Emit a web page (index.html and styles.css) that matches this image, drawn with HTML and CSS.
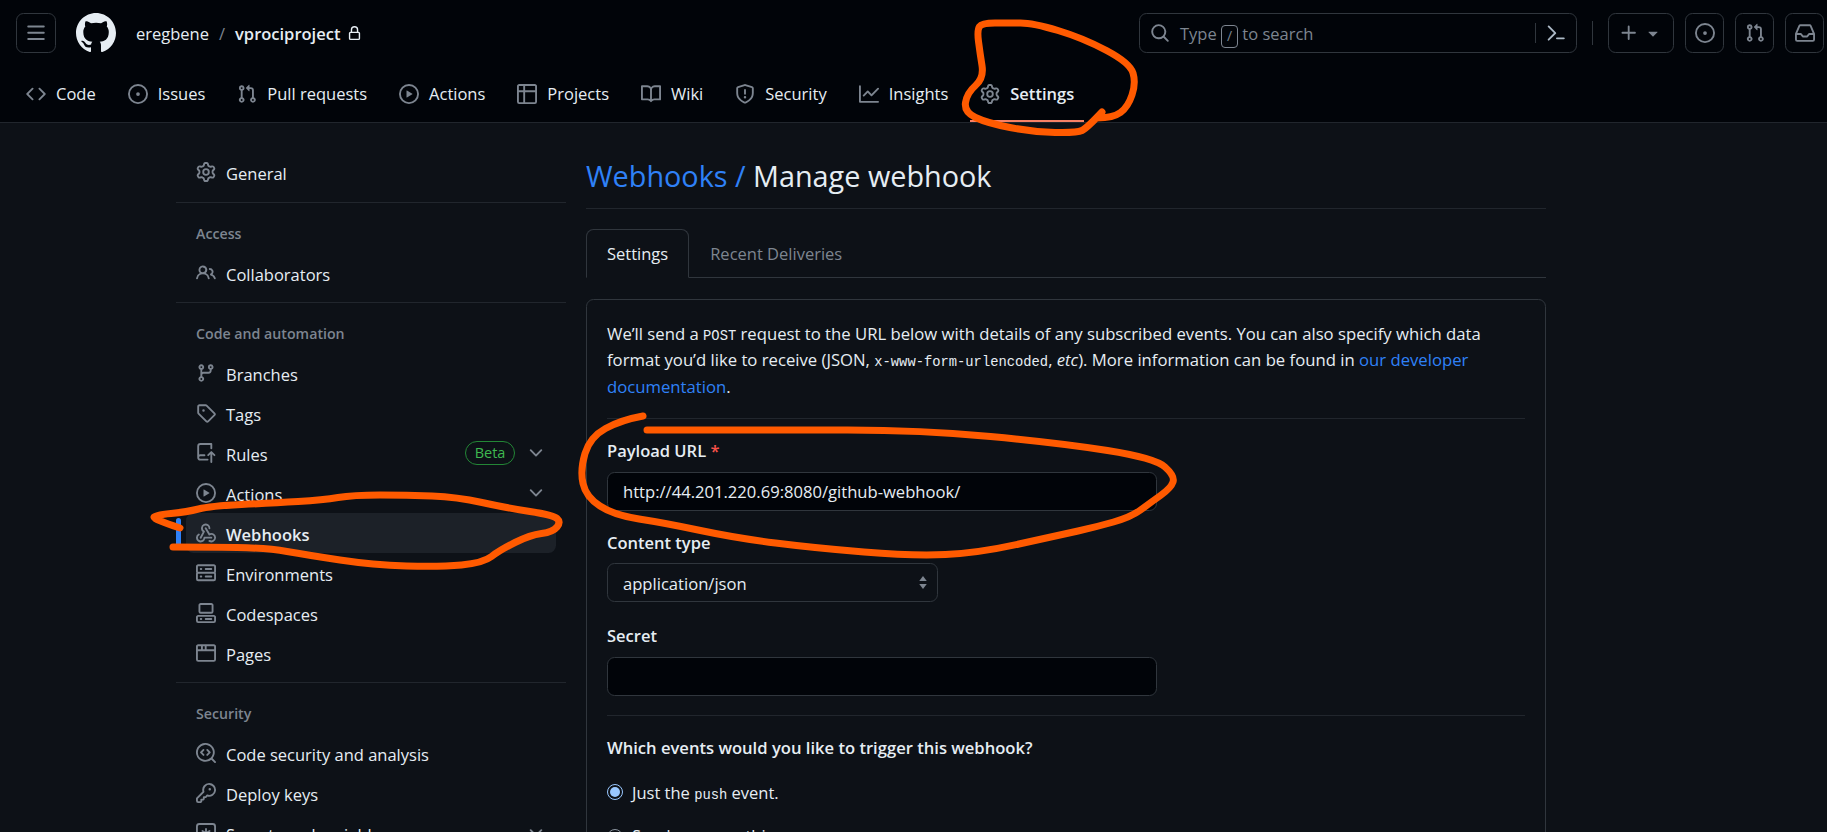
FILE: index.html
```html
<!DOCTYPE html>
<html lang="en">
<head>
<meta charset="UTF-8">
<meta name="viewport" content="width=device-width, initial-scale=1.0">
<title>Manage webhook</title>
<link rel="stylesheet" href="styles.css">
</head>
<body>
<svg class="sprite" xmlns="http://www.w3.org/2000/svg">
    <symbol id="i-bars" viewBox="0 0 16 16"><path d="M1 2.75A.75.75 0 0 1 1.75 2h12.5a.75.75 0 0 1 0 1.5H1.75A.75.75 0 0 1 1 2.75Zm0 5A.75.75 0 0 1 1.75 7h12.5a.75.75 0 0 1 0 1.5H1.75A.75.75 0 0 1 1 7.75ZM1.75 12h12.5a.75.75 0 0 1 0 1.5H1.75a.75.75 0 0 1 0-1.5Z"/></symbol>
    <symbol id="i-github" viewBox="0 0 16 16"><path d="M8 0c4.42 0 8 3.58 8 8a8.013 8.013 0 0 1-5.45 7.59c-.4.08-.55-.17-.55-.38 0-.27.01-1.13.01-2.2 0-.75-.25-1.23-.54-1.48 1.78-.2 3.65-.88 3.65-3.95 0-.88-.31-1.59-.82-2.15.08-.2.36-1.02-.08-2.12 0 0-.67-.22-2.2.82-.64-.18-1.32-.27-2-.27-.68 0-1.36.09-2 .27-1.53-1.03-2.2-.82-2.2-.82-.44 1.1-.16 1.92-.08 2.12-.51.56-.82 1.28-.82 2.15 0 3.06 1.86 3.75 3.64 3.95-.23.2-.44.55-.51 1.07-.46.21-1.61.55-2.33-.66-.15-.24-.6-.83-1.23-.82-.67.01-.27.38.01.53.34.19.73.9.82 1.13.16.45.68 1.31 2.69.94 0 .67.01 1.3.01 1.49 0 .21-.15.45-.55.38A7.995 7.995 0 0 1 0 8c0-4.42 3.58-8 8-8Z"/></symbol>
    <symbol id="i-lock" viewBox="0 0 16 16"><path d="M4 4a4 4 0 0 1 8 0v2h.25c.966 0 1.75.784 1.75 1.75v5.5A1.75 1.75 0 0 1 12.25 15h-8.5A1.75 1.75 0 0 1 2 13.25v-5.5C2 6.784 2.784 6 3.75 6H4Zm8.25 3.5h-8.5a.25.25 0 0 0-.25.25v5.5c0 .138.112.25.25.25h8.5a.25.25 0 0 0 .25-.25v-5.5a.25.25 0 0 0-.25-.25ZM10.5 6V4a2.5 2.5 0 1 0-5 0v2Z"/></symbol>
    <symbol id="i-code" viewBox="0 0 16 16"><path d="m11.28 3.22 4.25 4.25a.75.75 0 0 1 0 1.06l-4.25 4.25a.749.749 0 0 1-1.275-.326.749.749 0 0 1 .215-.734L13.94 8l-3.72-3.72a.749.749 0 0 1 .326-1.275.749.749 0 0 1 .734.215Zm-6.56 0a.751.751 0 0 1 1.042.018.751.751 0 0 1 .018 1.042L2.06 8l3.72 3.72a.749.749 0 0 1-.326 1.275.749.749 0 0 1-.734-.215L.47 8.53a.75.75 0 0 1 0-1.06Z"/></symbol>
    <symbol id="i-issue" viewBox="0 0 16 16"><path d="M8 9.5a1.5 1.5 0 1 0 0-3 1.5 1.5 0 0 0 0 3Z"/><path d="M8 0a8 8 0 1 1 0 16A8 8 0 0 1 8 0ZM1.5 8a6.5 6.5 0 1 0 13 0 6.5 6.5 0 0 0-13 0Z"/></symbol>
    <symbol id="i-pull" viewBox="0 0 16 16"><path d="M1.5 3.25a2.25 2.25 0 1 1 3 2.122v5.256a2.251 2.251 0 1 1-1.5 0V5.372A2.25 2.25 0 0 1 1.5 3.25Zm5.677-.177L9.573.677A.25.25 0 0 1 10 .854V2.5h1A2.5 2.5 0 0 1 13.5 5v5.628a2.251 2.251 0 1 1-1.5 0V5a1 1 0 0 0-1-1h-1v1.646a.25.25 0 0 1-.427.177L7.177 3.427a.25.25 0 0 1 0-.354ZM3.75 2.5a.75.75 0 1 0 0 1.5.75.75 0 0 0 0-1.5Zm0 9.5a.75.75 0 1 0 0 1.5.75.75 0 0 0 0-1.5Zm8.25.75a.75.75 0 1 0 1.5 0 .75.75 0 0 0-1.5 0Z"/></symbol>
    <symbol id="i-play" viewBox="0 0 16 16"><path d="M8 0a8 8 0 1 1 0 16A8 8 0 0 1 8 0ZM1.5 8a6.5 6.5 0 1 0 13 0 6.5 6.5 0 0 0-13 0Zm4.879-2.773 4.264 2.559a.25.25 0 0 1 0 .428l-4.264 2.559A.25.25 0 0 1 6 10.559V5.442a.25.25 0 0 1 .379-.215Z"/></symbol>
    <symbol id="i-table" viewBox="0 0 16 16"><path d="M0 1.75C0 .784.784 0 1.75 0h12.5C15.216 0 16 .784 16 1.75v12.5A1.75 1.75 0 0 1 14.25 16H1.75A1.75 1.75 0 0 1 0 14.25ZM6.5 6.5v8h7.75a.25.25 0 0 0 .25-.25V6.5Zm8-1.5V1.75a.25.25 0 0 0-.25-.25H6.5V5Zm-13 1.5v7.75c0 .138.112.25.25.25H5v-8ZM5 5V1.5H1.75a.25.25 0 0 0-.25.25V5Z"/></symbol>
    <symbol id="i-book" viewBox="0 0 16 16"><path d="M0 1.75A.75.75 0 0 1 .75 1h4.253c1.227 0 2.317.59 3 1.501A3.743 3.743 0 0 1 11.006 1h4.245a.75.75 0 0 1 .75.75v10.5a.75.75 0 0 1-.75.75h-4.507a2.25 2.25 0 0 0-1.591.659l-.622.621a.75.75 0 0 1-1.06 0l-.622-.621A2.25 2.25 0 0 0 5.258 13H.75a.75.75 0 0 1-.75-.75Zm7.251 10.324.004-5.073-.002-2.253A2.25 2.25 0 0 0 5.003 2.5H1.5v9h3.757a3.75 3.75 0 0 1 1.994.574ZM8.755 4.75l-.004 7.322a3.752 3.752 0 0 1 1.992-.572H14.5v-9h-3.495a2.25 2.25 0 0 0-2.25 2.25Z"/></symbol>
    <symbol id="i-shield" viewBox="0 0 16 16"><path d="M7.467.133a1.748 1.748 0 0 1 1.066 0l5.25 1.68A1.75 1.75 0 0 1 15 3.48V7c0 1.566-.32 3.182-1.303 4.682-.983 1.498-2.585 2.813-5.032 3.855a1.697 1.697 0 0 1-1.33 0c-2.447-1.042-4.049-2.357-5.032-3.855C1.32 10.182 1 8.566 1 7V3.48a1.75 1.75 0 0 1 1.217-1.667Zm.61 1.429a.25.25 0 0 0-.153 0l-5.25 1.68a.25.25 0 0 0-.174.238V7c0 1.358.275 2.666 1.057 3.86.784 1.194 2.121 2.34 4.366 3.297a.196.196 0 0 0 .154 0c2.245-.956 3.582-2.104 4.366-3.298C13.225 9.666 13.5 8.36 13.5 7V3.48a.251.251 0 0 0-.174-.237l-5.25-1.68ZM8.75 4.75v3a.75.75 0 0 1-1.5 0v-3a.75.75 0 0 1 1.5 0ZM9 10.5a1 1 0 1 1-2 0 1 1 0 0 1 2 0Z"/></symbol>
    <symbol id="i-graph" viewBox="0 0 16 16"><path d="M1.5 1.75V13.5h13.75a.75.75 0 0 1 0 1.5H.75a.75.75 0 0 1-.75-.75V1.75a.75.75 0 0 1 1.5 0Zm14.28 2.53-5.25 5.25a.75.75 0 0 1-1.06 0L7 7.06 4.28 9.78a.751.751 0 0 1-1.042-.018.751.751 0 0 1-.018-1.042l3.25-3.25a.75.75 0 0 1 1.06 0L10 7.94l4.72-4.72a.751.751 0 0 1 1.042.018.751.751 0 0 1 .018 1.042Z"/></symbol>
    <symbol id="i-gear" viewBox="0 0 16 16"><path d="M8 0a8.2 8.2 0 0 1 .701.031C9.444.095 9.99.645 10.16 1.29l.288 1.107c.018.066.079.158.212.224.231.114.454.243.668.386.123.082.233.09.299.071l1.103-.303c.644-.176 1.392.021 1.82.63.27.385.506.792.704 1.218.315.675.111 1.422-.364 1.891l-.814.806c-.049.048-.098.147-.088.294.016.257.016.515 0 .772-.01.147.038.246.088.294l.814.806c.475.469.679 1.216.364 1.891a7.977 7.977 0 0 1-.704 1.217c-.428.61-1.176.807-1.82.63l-1.102-.302c-.067-.019-.177-.011-.3.071a5.909 5.909 0 0 1-.668.386c-.133.066-.194.158-.211.224l-.29 1.106c-.168.646-.715 1.196-1.458 1.26a8.006 8.006 0 0 1-1.402 0c-.743-.064-1.289-.614-1.458-1.26l-.289-1.106c-.018-.066-.079-.158-.212-.224a5.738 5.738 0 0 1-.668-.386c-.123-.082-.233-.09-.299-.071l-1.103.303c-.644.176-1.392-.021-1.82-.63a8.12 8.12 0 0 1-.704-1.218c-.315-.675-.111-1.422.363-1.891l.815-.806c.05-.048.098-.147.088-.294a6.214 6.214 0 0 1 0-.772c.01-.147-.038-.246-.088-.294l-.815-.806C.635 6.045.431 5.298.746 4.623a7.92 7.92 0 0 1 .704-1.217c.428-.61 1.176-.807 1.82-.63l1.102.302c.067.019.177.011.3-.071.214-.143.437-.272.668-.386.133-.066.194-.158.211-.224l.29-1.106C6.009.645 6.556.095 7.299.03 7.53.01 7.764 0 8 0Zm-.571 1.525c-.036.003-.108.036-.137.146l-.289 1.105c-.147.561-.549.967-.998 1.189-.173.086-.34.183-.5.29-.417.278-.97.423-1.529.27l-1.103-.303c-.109-.03-.175.016-.195.045-.22.312-.412.644-.573.99-.014.031-.021.11.059.19l.815.806c.411.406.562.957.53 1.456a4.709 4.709 0 0 0 0 .582c.032.499-.119 1.05-.53 1.456l-.815.806c-.081.08-.073.159-.059.19.162.346.353.677.573.989.02.03.085.076.195.046l1.102-.303c.56-.153 1.113-.008 1.53.27.161.107.328.204.501.29.447.222.85.629.997 1.189l.289 1.105c.029.109.101.143.137.146a6.6 6.6 0 0 0 1.142 0c.036-.003.108-.036.137-.146l.289-1.105c.147-.561.549-.967.998-1.189.173-.086.34-.183.5-.29.417-.278.97-.423 1.529-.27l1.103.303c.109.029.175-.016.195-.045.22-.313.411-.644.573-.99.014-.031.021-.11-.059-.19l-.815-.806c-.411-.406-.562-.957-.53-1.456a4.709 4.709 0 0 0 0-.582c-.032-.499.119-1.05.53-1.456l.815-.806c.081-.08.073-.159.059-.19a6.464 6.464 0 0 0-.573-.989c-.02-.03-.085-.076-.195-.046l-1.102.303c-.56.153-1.113.008-1.53-.27a4.44 4.44 0 0 0-.501-.29c-.447-.222-.85-.629-.997-1.189l-.289-1.105c-.029-.11-.101-.143-.137-.146a6.6 6.6 0 0 0-1.142 0ZM11 8a3 3 0 1 1-6 0 3 3 0 0 1 6 0ZM9.5 8a1.5 1.5 0 1 0-3.001.001A1.5 1.5 0 0 0 9.5 8Z"/></symbol>
    <symbol id="i-search" viewBox="0 0 16 16"><path d="M10.68 11.74a6 6 0 0 1-7.922-8.982 6 6 0 0 1 8.982 7.922l3.04 3.04a.749.749 0 0 1-.326 1.275.749.749 0 0 1-.734-.215ZM11.5 7a4.499 4.499 0 1 0-8.997 0A4.499 4.499 0 0 0 11.5 7Z"/></symbol>
    <symbol id="i-palette" viewBox="0 0 16 16"><path d="m6.354 8.04-4.773 4.773a.75.75 0 1 0 1.061 1.06L7.945 8.57a.75.75 0 0 0 0-1.06L2.642 2.206a.75.75 0 0 0-1.06 1.061L6.353 8.04ZM8.75 11.5a.75.75 0 0 0 0 1.5h5.5a.75.75 0 0 0 0-1.5h-5.5Z"/></symbol>
    <symbol id="i-plus" viewBox="0 0 16 16"><path d="M7.75 2a.75.75 0 0 1 .75.75V7h4.25a.75.75 0 0 1 0 1.5H8.5v4.25a.75.75 0 0 1-1.5 0V8.5H2.75a.75.75 0 0 1 0-1.5H7V2.75A.75.75 0 0 1 7.75 2Z"/></symbol>
    <symbol id="i-caret" viewBox="0 0 16 16"><path d="m4.427 7.427 3.396 3.396a.25.25 0 0 0 .354 0l3.396-3.396A.25.25 0 0 0 11.396 7H4.604a.25.25 0 0 0-.177.427Z"/></symbol>
    <symbol id="i-inbox" viewBox="0 0 16 16"><path d="M2.8 2.06A1.75 1.75 0 0 1 4.41 1h7.18c.7 0 1.333.417 1.61 1.06l2.74 6.395c.04.093.06.194.06.295v4.5A1.75 1.75 0 0 1 14.25 15H1.75A1.75 1.75 0 0 1 0 13.25v-4.5c0-.101.02-.202.06-.295Zm1.61.44a.25.25 0 0 0-.23.152L1.887 8H4.75a.75.75 0 0 1 .6.3L6.625 10h2.75l1.275-1.7a.75.75 0 0 1 .6-.3h2.863L11.82 2.652a.25.25 0 0 0-.23-.152Zm10.09 7h-2.875l-1.275 1.7a.75.75 0 0 1-.6.3h-3.5a.75.75 0 0 1-.6-.3L4.375 9.5H1.5v3.75c0 .138.112.25.25.25h12.5a.25.25 0 0 0 .25-.25Z"/></symbol>
    <symbol id="i-people" viewBox="0 0 16 16"><path d="M2 5.5a3.5 3.5 0 1 1 5.898 2.549 5.508 5.508 0 0 1 3.034 4.084.75.75 0 1 1-1.482.235 4 4 0 0 0-7.9 0 .75.75 0 0 1-1.482-.236A5.507 5.507 0 0 1 3.102 8.05 3.493 3.493 0 0 1 2 5.5ZM11 4a3.001 3.001 0 0 1 2.22 5.018 5.01 5.01 0 0 1 2.56 3.012.749.749 0 0 1-.885.954.752.752 0 0 1-.549-.514 3.507 3.507 0 0 0-2.522-2.372.75.75 0 0 1-.574-.73v-.352a.75.75 0 0 1 .416-.672A1.5 1.5 0 0 0 11 5.5.75.75 0 0 1 11 4Zm-5.5-.5a2 2 0 1 0-.001 3.999A2 2 0 0 0 5.5 3.5Z"/></symbol>
    <symbol id="i-branch" viewBox="0 0 16 16"><path d="M9.5 3.25a2.25 2.25 0 1 1 3 2.122V6A2.5 2.5 0 0 1 10 8.5H6a1 1 0 0 0-1 1v1.128a2.251 2.251 0 1 1-1.5 0V5.372a2.25 2.25 0 1 1 1.5 0v1.836A2.493 2.493 0 0 1 6 7h4a1 1 0 0 0 1-1v-.628A2.25 2.25 0 0 1 9.5 3.25Zm-6 0a.75.75 0 1 0 1.5 0 .75.75 0 0 0-1.5 0Zm8.25-.75a.75.75 0 1 0 0 1.5.75.75 0 0 0 0-1.5ZM4.25 12a.75.75 0 1 0 0 1.5.75.75 0 0 0 0-1.5Z"/></symbol>
    <symbol id="i-tag" viewBox="0 0 16 16"><path d="M1 7.775V2.75C1 1.784 1.784 1 2.75 1h5.025c.464 0 .91.184 1.238.513l6.25 6.25a1.75 1.75 0 0 1 0 2.474l-5.026 5.026a1.75 1.75 0 0 1-2.474 0l-6.25-6.25A1.752 1.752 0 0 1 1 7.775Zm1.5 0c0 .066.026.13.073.177l6.25 6.25a.25.25 0 0 0 .354 0l5.025-5.025a.25.25 0 0 0 0-.354l-6.25-6.25a.25.25 0 0 0-.177-.073H2.75a.25.25 0 0 0-.25.25ZM6 5a1 1 0 1 1 0 2 1 1 0 0 1 0-2Z"/></symbol>
    <symbol id="i-rules" viewBox="0 0 16 16"><path d="M1 2.5A2.5 2.5 0 0 1 3.5 0h8.75a.75.75 0 0 1 .75.75v3.5a.75.75 0 0 1-1.5 0V1.5h-8a1 1 0 0 0-1 1v6.708A2.493 2.493 0 0 1 3.5 9h3.25a.75.75 0 0 1 0 1.5H3.5a1 1 0 0 0 0 2h5.75a.75.75 0 0 1 0 1.5H3.5A2.5 2.5 0 0 1 1 11.5Zm13.23 7.79h-.001l-1.224-1.224v6.184a.75.75 0 0 1-1.5 0V9.066L10.28 10.29a.75.75 0 0 1-1.06-1.061l2.505-2.504a.75.75 0 0 1 1.06 0L15.29 9.23a.751.751 0 0 1-.018 1.042.751.751 0 0 1-1.042.018Z"/></symbol>
    <symbol id="i-webhook" viewBox="0 0 16 16"><path d="M5.5 4.25a2.25 2.25 0 0 1 4.5 0 .75.75 0 0 0 1.5 0 3.75 3.75 0 1 0-6.14 2.889l-2.272 4.258a.75.75 0 0 0 1.324.706L7 7.25a.75.75 0 0 0-.309-1.015A2.25 2.25 0 0 1 5.5 4.25Z"/><path d="M7.364 3.607a.75.75 0 0 1 1.03.257l2.608 4.349a3.75 3.75 0 1 1-.628 6.785.75.75 0 0 1 .752-1.299 2.25 2.25 0 1 0-.033-3.88.75.75 0 0 1-1.03-.256L7.107 4.636a.75.75 0 0 1 .257-1.03Z"/><path d="M2.9 8.776A.75.75 0 0 1 2.625 9.8 2.25 2.25 0 1 0 6 11.75a.75.75 0 0 1 .75-.751h5.5a.75.75 0 0 1 0 1.5H7.425a3.751 3.751 0 1 1-5.55-3.998.75.75 0 0 1 1.024.274Z"/></symbol>
    <symbol id="i-server" viewBox="0 0 16 16"><path d="M1.75 1h12.5c.966 0 1.75.784 1.75 1.75v4c0 .372-.116.717-.314 1 .198.283.314.628.314 1v4a1.75 1.75 0 0 1-1.75 1.75H1.75A1.75 1.75 0 0 1 0 12.75v-4c0-.372.116-.717.314-1a1.739 1.739 0 0 1-.314-1v-4C0 1.784.784 1 1.75 1ZM1.5 2.75v4c0 .138.112.25.25.25h12.5a.25.25 0 0 0 .25-.25v-4a.25.25 0 0 0-.25-.25H1.75a.25.25 0 0 0-.25.25Zm.25 5.75a.25.25 0 0 0-.25.25v4c0 .138.112.25.25.25h12.5a.25.25 0 0 0 .25-.25v-4a.25.25 0 0 0-.25-.25ZM7 4.75A.75.75 0 0 1 7.75 4h4.5a.75.75 0 0 1 0 1.5h-4.5A.75.75 0 0 1 7 4.75ZM7.75 10h4.5a.75.75 0 0 1 0 1.5h-4.5a.75.75 0 0 1 0-1.5ZM3 4.75A.75.75 0 0 1 3.75 4h.5a.75.75 0 0 1 0 1.5h-.5A.75.75 0 0 1 3 4.75ZM3.75 10h.5a.75.75 0 0 1 0 1.5h-.5a.75.75 0 0 1 0-1.5Z"/></symbol>
    <symbol id="i-codespaces" viewBox="0 0 16 16"><path d="M0 11.25c0-.966.784-1.75 1.75-1.75h12.5c.966 0 1.75.784 1.75 1.75v3A1.75 1.75 0 0 1 14.25 16H1.75A1.75 1.75 0 0 1 0 14.25Zm2-9.5C2 .784 2.784 0 3.75 0h8.5C13.216 0 14 .784 14 1.75v5a1.75 1.75 0 0 1-1.75 1.75h-8.5A1.75 1.75 0 0 1 2 6.75Zm1.75-.25a.25.25 0 0 0-.25.25v5c0 .138.112.25.25.25h8.5a.25.25 0 0 0 .25-.25v-5a.25.25 0 0 0-.25-.25Zm-2 9.5a.25.25 0 0 0-.25.25v3c0 .138.112.25.25.25h12.5a.25.25 0 0 0 .25-.25v-3a.25.25 0 0 0-.25-.25Z"/><path d="M7 12.75a.75.75 0 0 1 .75-.75h4.5a.75.75 0 0 1 0 1.5h-4.5a.75.75 0 0 1-.75-.75Zm-4 0a.75.75 0 0 1 .75-.75h.5a.75.75 0 0 1 0 1.5h-.5a.75.75 0 0 1-.75-.75Z"/></symbol>
    <symbol id="i-browser" viewBox="0 0 16 16"><path d="M0 2.75C0 1.784.784 1 1.75 1h12.5c.966 0 1.75.784 1.75 1.75v10.5A1.75 1.75 0 0 1 14.25 15H1.75A1.75 1.75 0 0 1 0 13.25ZM14.5 6.5h-13v6.75c0 .138.112.25.25.25h12.5a.25.25 0 0 0 .25-.25Zm-6-1.5h6V2.75a.25.25 0 0 0-.25-.25H8.5Zm-1.5-2.5h-1.5V5H7Zm-3 0H1.75a.25.25 0 0 0-.25.25V5H4Z"/></symbol>
    <symbol id="i-codescan" viewBox="0 0 16 16"><path d="M8.47 4.97a.75.75 0 0 0 0 1.06L9.94 7.5 8.47 8.97a.75.75 0 1 0 1.06 1.06l2-2a.75.75 0 0 0 0-1.06l-2-2a.75.75 0 0 0-1.06 0ZM6.53 6.03a.75.75 0 0 0-1.06-1.06l-2 2a.75.75 0 0 0 0 1.06l2 2a.75.75 0 1 0 1.06-1.06L5.06 7.5l1.47-1.47Z"/><path d="M12.246 13.307a7.501 7.501 0 1 1 1.06-1.06l2.474 2.473a.749.749 0 0 1-.326 1.275.749.749 0 0 1-.734-.215ZM1.5 7.5a6.002 6.002 0 0 0 3.608 5.504 6.002 6.002 0 0 0 6.486-1.117.748.748 0 0 1 .292-.293A6 6 0 1 0 1.5 7.5Z"/></symbol>
    <symbol id="i-key" viewBox="0 0 16 16"><path d="M10.5 0a5.499 5.499 0 1 1-1.288 10.848l-.932.932a.749.749 0 0 1-.53.22H7v.75a.749.749 0 0 1-.22.53l-.5.5a.749.749 0 0 1-.53.22H5v.75a.749.749 0 0 1-.22.53l-.5.5a.749.749 0 0 1-.53.22h-2A1.75 1.75 0 0 1 0 14.25v-2c0-.199.079-.389.22-.53l4.932-4.932A5.5 5.5 0 0 1 10.5 0Zm-4 5.5c-.001.431.069.86.205 1.269a.75.75 0 0 1-.181.768L1.5 12.56v1.69c0 .138.112.25.25.25h1.69l.06-.06v-1.19a.75.75 0 0 1 .75-.75h1.19l.06-.06v-1.19a.75.75 0 0 1 .75-.75h1.19l1.023-1.025a.75.75 0 0 1 .768-.18A4 4 0 1 0 6.5 5.5ZM11 6a1 1 0 1 1 0-2 1 1 0 0 1 0 2Z"/></symbol>
    <symbol id="i-asterisk" viewBox="0 0 16 16"><path d="M0 2.75A2.75 2.75 0 0 1 2.75 0h10.5A2.75 2.75 0 0 1 16 2.75v10.5A2.75 2.75 0 0 1 13.25 16H2.75A2.75 2.75 0 0 1 0 13.25ZM2.75 1.5c-.69 0-1.25.56-1.25 1.25v10.5c0 .69.56 1.25 1.25 1.25h10.5c.69 0 1.25-.56 1.25-1.25V2.75c0-.69-.56-1.25-1.25-1.25Z"/><path d="M8 4a.75.75 0 0 1 .75.75V6.7l1.69-.975a.75.75 0 0 1 .75 1.3L9.5 8l1.69.976a.75.75 0 0 1-.75 1.298L8.75 9.3v1.951a.75.75 0 0 1-1.5 0V9.299l-1.69.976a.75.75 0 0 1-.75-1.3L6.5 8l-1.69-.975a.75.75 0 0 1 .75-1.3l1.69.976V4.75A.75.75 0 0 1 8 4Z"/></symbol>
    <symbol id="i-chevron" viewBox="0 0 16 16"><path d="M12.78 5.22a.749.749 0 0 1 0 1.06l-4.25 4.25a.749.749 0 0 1-1.06 0L3.22 6.28a.749.749 0 1 1 1.06-1.06L8 8.939l3.72-3.719a.749.749 0 0 1 1.06 0Z"/></symbol>
    <symbol id="i-unfold" viewBox="0 0 10 16"><path d="M5 1 9 6.5H1Z"/><path d="M5 15 1 9.5h8Z"/></symbol>
</svg>

<header class="site-header">
    <div class="top-row">
        <button class="icon-btn menu-btn"><svg class="icon"><use href="#i-bars"/></svg></button>
        <svg class="logo"><use href="#i-github"/></svg>
        <div class="crumbs">
            <span class="owner">eregbene</span>
            <span class="slash">/</span>
            <strong class="repo">vprociproject</strong>
            <svg class="icon-lock"><use href="#i-lock"/></svg>
        </div>
        <div class="search">
            <svg class="icon"><use href="#i-search"/></svg>
            <span class="search-text">Type <kbd class="slash-key">/</kbd> to search</span>
            <span class="search-sep"></span>
            <svg class="icon icon-light"><use href="#i-palette"/></svg>
        </div>
        <span class="top-sep"></span>
        <button class="icon-btn plus-btn"><svg class="icon"><use href="#i-plus"/></svg><svg class="icon"><use href="#i-caret"/></svg></button>
        <button class="icon-btn"><svg class="icon"><use href="#i-issue"/></svg></button>
        <button class="icon-btn"><svg class="icon"><use href="#i-pull"/></svg></button>
        <button class="icon-btn"><svg class="icon"><use href="#i-inbox"/></svg></button>
    </div>
    <nav class="repo-nav">
        <a class="repo-tab"><svg class="icon"><use href="#i-code"/></svg>Code</a>
        <a class="repo-tab"><svg class="icon"><use href="#i-issue"/></svg>Issues</a>
        <a class="repo-tab"><svg class="icon"><use href="#i-pull"/></svg>Pull requests</a>
        <a class="repo-tab"><svg class="icon"><use href="#i-play"/></svg>Actions</a>
        <a class="repo-tab"><svg class="icon"><use href="#i-table"/></svg>Projects</a>
        <a class="repo-tab"><svg class="icon"><use href="#i-book"/></svg>Wiki</a>
        <a class="repo-tab"><svg class="icon"><use href="#i-shield"/></svg>Security</a>
        <a class="repo-tab"><svg class="icon"><use href="#i-graph"/></svg>Insights</a>
        <a class="repo-tab selected"><svg class="icon"><use href="#i-gear"/></svg>Settings</a>
    </nav>
</header>

<div class="layout">
    <aside class="sidebar">
        <a class="side-item"><svg class="icon"><use href="#i-gear"/></svg>General</a>
        <div class="side-sep side-sep-first"></div>
        <h2 class="side-head">Access</h2>
        <a class="side-item"><svg class="icon"><use href="#i-people"/></svg>Collaborators</a>
        <div class="side-sep"></div>
        <h2 class="side-head">Code and automation</h2>
        <a class="side-item"><svg class="icon"><use href="#i-branch"/></svg>Branches</a>
        <a class="side-item"><svg class="icon"><use href="#i-tag"/></svg>Tags</a>
        <a class="side-item"><svg class="icon"><use href="#i-rules"/></svg>Rules<span class="beta">Beta</span><svg class="icon side-chevron"><use href="#i-chevron"/></svg></a>
        <a class="side-item"><svg class="icon"><use href="#i-play"/></svg>Actions<svg class="icon side-chevron push"><use href="#i-chevron"/></svg></a>
        <a class="side-item current"><svg class="icon"><use href="#i-webhook"/></svg>Webhooks</a>
        <a class="side-item"><svg class="icon"><use href="#i-server"/></svg>Environments</a>
        <a class="side-item"><svg class="icon"><use href="#i-codespaces"/></svg>Codespaces</a>
        <a class="side-item"><svg class="icon"><use href="#i-browser"/></svg>Pages</a>
        <div class="side-sep"></div>
        <h2 class="side-head">Security</h2>
        <a class="side-item"><svg class="icon"><use href="#i-codescan"/></svg>Code security and analysis</a>
        <a class="side-item"><svg class="icon"><use href="#i-key"/></svg>Deploy keys</a>
        <a class="side-item"><svg class="icon"><use href="#i-asterisk"/></svg>Secrets and variables<svg class="icon side-chevron push"><use href="#i-chevron"/></svg></a>
    </aside>

    <main class="content">
        <h1 class="page-title"><a>Webhooks /</a> Manage webhook</h1>
        <div class="tabs">
            <a class="tab active">Settings</a>
            <a class="tab">Recent Deliveries</a>
        </div>
        <form class="card">
            <p class="intro">We’ll send a <code class="small-code">POST</code> request to the URL below with details of any subscribed events. You can also specify which data<br>
            format you’d like to receive (JSON, <code class="small-code">x-www-form-urlencoded</code>, <em>etc</em>). More information can be found in <a>our developer<br>documentation</a>.</p>
            <hr class="rule">
            <label class="field-label" for="url">Payload URL <span class="req">*</span></label>
            <input class="field" id="url" type="text" value="http://44.201.220.69:8080/github-webhook/">
            <label class="field-label" for="ctype">Content type</label>
            <div class="select-wrap">
                <select class="field select" id="ctype">
                    <option>application/json</option>
                    <option>application/x-www-form-urlencoded</option>
                </select>
                <svg class="unfold"><use href="#i-unfold"/></svg>
            </div>
            <label class="field-label secret-label" for="secret">Secret</label>
            <input class="field" id="secret" type="text">
            <hr class="rule">
            <h3 class="events-head">Which events would you like to trigger this webhook?</h3>
            <label class="radio-row"><input type="radio" name="events" checked><span>Just the <code class="small-code">push</code> event.</span></label>
            <label class="radio-row"><input type="radio" name="events"><span>Send me everything.</span></label>
        </form>
    </main>
</div>

<!-- hand drawn marks on top of the screenshot -->
<svg class="marks" viewBox="0 0 1827 832" xmlns="http://www.w3.org/2000/svg">
    <path d="M1102 112Q1087 128 1082 130.5Q1077 133 1055 132.5Q1033 132 1010 127.5Q987 123 975.5 117.5Q964 112 965.5 102.5Q967 93 975.5 85.5Q984 78 982 65.5Q980 53 978.5 41.5Q977 30 979.5 26.5Q982 23 995 23Q1008 23 1020.5 23Q1033 23 1058 30.5Q1083 38 1106.5 50.5Q1130 63 1133 73Q1136 83 1132 95Q1128 107 1120.5 112.5Q1113 118 1097 118"/>
    <path d="M180 528Q153 519 154 517Q155 515 171 513.5Q187 512 198.5 509Q210 506 241.5 504.5Q273 503 298 501.5Q323 500 338 497.5Q353 495 380 495Q407 495 432 496Q457 497 482 502.5Q507 508 530 511.5Q553 515 557 518.5Q561 522 557 527Q553 532 541.5 533.5Q530 535 515 542.5Q500 550 491.5 556.5Q483 563 461.5 565Q440 567 406.5 566Q373 565 340 560Q307 555 287 551.5Q267 548 237 547.5Q207 547 173 547"/>
    <path d="M643 416Q621 420 605.5 428.5Q590 437 585 453.5Q580 470 583 483.5Q586 497 600 506Q613.5 515 639 519Q665 523 700.5 530.5Q736 538 775.5 543Q815 548 864 552Q913 556 945.5 554.5Q978 553 1019 544Q1060 535 1078 531Q1096 527 1113.5 522Q1131 517 1140.5 510Q1150 503 1160.5 495.5Q1171 488 1173 482Q1175 476 1165 467Q1155 458 1107.5 450.5Q1060 443 990.5 436.5Q921 430 847.5 430Q774 430 647 430"/>
</svg>
</body>
</html>
```

FILE: styles.css
```css
/* dark github settings page, everything at 125% */
html, body {
    height: 832px;
    overflow: hidden;
}
body {
    margin: 0;
    background-color: #0d1117;
    color: #e6edf3;
    font-family: "Open Sans", "Noto Sans", sans-serif;
    font-size: 16.5px;
    line-height: 1.5;
}
.sprite {
    display: none;
}
.icon {
    width: 20px;
    height: 20px;
    flex: none;
    fill: #7d8590;
}
.icon-light {
    fill: #adbac7;
}

/* header */
.site-header {
    height: 122px;
    background-color: #010409;
    border-bottom: 1px solid #21262d;
}
.top-row {
    display: flex;
    align-items: center;
    height: 40px;
    padding: 13px 3px 0 16px;
}
.icon-btn {
    display: flex;
    align-items: center;
    justify-content: center;
    gap: 4px;
    box-sizing: border-box;
    width: 39px;
    height: 40px;
    margin-left: 11px;
    padding: 0;
    background: none;
    border: 1px solid #30363d;
    border-radius: 7.5px;
}
.menu-btn {
    width: 40px;
    margin-left: 0;
}
.plus-btn {
    width: 66px;
    margin-left: 0;
}
.logo {
    width: 40px;
    height: 40px;
    margin: 0 20px;
    fill: #e6edf3;
}
.crumbs {
    display: flex;
    align-items: center;
    gap: 7px;
    padding-top: 3px;
}
.owner {
    margin-right: 3px;
}
.slash {
    color: #7d8590;
    margin-right: 3px;
}
.repo {
    font-weight: 600;
}
.icon-lock {
    width: 15px;
    height: 15px;
    margin-bottom: 3px;
    fill: #e6edf3;
}
.search {
    display: flex;
    align-items: center;
    box-sizing: border-box;
    width: 438px;
    height: 40px;
    margin-left: auto;
    padding: 0 10px;
    border: 1px solid #30363d;
    border-radius: 7.5px;
}
.search-text {
    flex: 1;
    margin-left: 10px;
    padding-top: 3px;
    color: #7d8590;
}
.slash-key {
    display: inline-block;
    width: 15px;
    height: 21px;
    border: 1px solid #7d8590;
    border-radius: 4px;
    font-family: inherit;
    font-size: 14px;
    line-height: 20px;
    text-align: center;
    vertical-align: -1px;
}
.search-sep {
    width: 1px;
    height: 20px;
    margin-right: 10px;
    background-color: #30363d;
}
.top-sep {
    width: 1px;
    height: 24px;
    margin: 0 15px;
    background-color: #30363d;
}
.repo-nav {
    display: flex;
    gap: 12px;
    height: 69px;
    padding-left: 16px;
}
.repo-tab {
    position: relative;
    display: flex;
    align-items: center;
    gap: 10px;
    padding: 13px 10px 0;
    white-space: nowrap;
}
.repo-tab.selected {
    font-weight: 600;
}
.repo-tab.selected::after {
    content: "";
    position: absolute;
    left: 0;
    right: 0;
    bottom: 0;
    height: 2.5px;
    background-color: #f78166;
}

/* two columns */
.layout {
    display: flex;
    gap: 20px;
    padding-left: 176px;
}
.sidebar {
    width: 390px;
    flex: none;
    padding-top: 29px;
}
.side-item {
    position: relative;
    display: flex;
    align-items: center;
    gap: 10px;
    box-sizing: border-box;
    height: 40px;
    margin: 0 10px;
    padding: 4px 10px 0;
    border-radius: 7.5px;
    white-space: nowrap;
}
.side-item .icon,
.beta {
    margin-top: -4px;
}
.side-item.current {
    background-color: #1c2128;
    font-weight: 600;
}
.side-item.current::before {
    content: "";
    position: absolute;
    left: -10px;
    top: 5px;
    bottom: 5px;
    width: 5px;
    border-radius: 5px;
    background-color: #2f81f7;
}
.side-sep {
    height: 1px;
    margin-top: 9px;
    background-color: #21262d;
}
.side-sep-first {
    margin-top: 10px;
}
.side-head {
    height: 50px;
    box-sizing: border-box;
    margin: 0;
    padding: 20px 0 0 20px;
    color: #7d8590;
    font-size: 14.2px;
    font-weight: 600;
    line-height: 22px;
}
.beta {
    box-sizing: border-box;
    width: 50px;
    height: 24px;
    margin-left: auto;
    border: 1px solid #238636;
    border-radius: 12px;
    color: #3fb950;
    font-size: 14.5px;
    font-weight: 500;
    line-height: 21px;
    text-align: center;
}
.side-chevron {
    margin-left: 1px;
}
.side-chevron.push {
    margin-left: auto;
}

/* right column */
.content {
    width: 960px;
    flex: none;
}
.page-title {
    height: 56px;
    box-sizing: border-box;
    margin: 30px 0 0;
    border-bottom: 1px solid #21262d;
    font-size: 28.8px;
    font-weight: 400;
    line-height: 46px;
}
.page-title a {
    color: #2f81f7;
}
.tabs {
    display: flex;
    height: 49px;
    margin-top: 20px;
    box-sizing: border-box;
    border-bottom: 1px solid #30363d;
}
.tab {
    box-sizing: border-box;
    height: 49px;
    padding: 12px 20px 0;
    color: #7d8590;
    border: 1px solid transparent;
}
.tab.active {
    color: #e6edf3;
    background-color: #0d1117;
    border-color: #30363d;
    border-bottom-color: #0d1117;
    border-radius: 7.5px 7.5px 0 0;
}
.card {
    height: 700px;
    margin-top: 21px;
    padding: 20px;
    border: 1px solid #30363d;
    border-radius: 7.5px;
}
.intro {
    margin: 1px 0 -1px;
    font-size: 16.7px;
    line-height: 26.25px;
    white-space: nowrap;
}
.intro a {
    color: #2f81f7;
}
.small-code {
    font-family: "Liberation Mono", monospace;
    font-size: 13.8px;
    line-height: 1;
}
.rule {
    height: 1px;
    margin: 19px 0;
    border: 0;
    background-color: #21262d;
}
.field-label {
    display: block;
    height: 26px;
    font-weight: 600;
    line-height: 26px;
}
.secret-label {
    margin-top: 21px;
}
.req {
    color: #f85149;
}
.field {
    display: block;
    box-sizing: border-box;
    width: 550px;
    height: 39px;
    margin: 8px 0 19px;
    padding: 0 15px;
    background-color: #010409;
    border: 1px solid #30363d;
    border-radius: 7.5px;
    color: #e6edf3;
    font-family: inherit;
    font-size: 16.6px;
}
#secret {
    margin-bottom: 0;
}
.select-wrap {
    position: relative;
    width: 331px;
    margin-top: 7px;
}
.select {
    width: 100%;
    margin: 0;
    padding-top: 3px;
    background-color: #0d1117;
    appearance: none;
}
.unfold {
    position: absolute;
    right: 9px;
    top: 12px;
    width: 12px;
    height: 15px;
    fill: #7d8590;
}
.events-head {
    height: 26px;
    margin: 0 0 18px;
    font-size: 16.6px;
    font-weight: 600;
    line-height: 26px;
}
.radio-row {
    display: flex;
    align-items: center;
    box-sizing: border-box;
    height: 26px;
    margin-bottom: 17px;
    padding-top: 3px;
    white-space: pre;
}
.radio-row input {
    box-sizing: border-box;
    width: 16px;
    height: 16px;
    margin: -3px 9px 0 0;
    padding: 2px;
    appearance: none;
    border: 1px solid #8b949e;
    border-radius: 50%;
    background-clip: content-box;
}
.radio-row + .radio-row input {
    margin-top: 1px;
}
.radio-row input:checked {
    border-color: #99c8ff;
    background-color: #99c8ff;
}

/* the orange pen marks */
.marks {
    position: absolute;
    left: 0;
    top: 0;
    width: 1827px;
    height: 832px;
    pointer-events: none;
    fill: none;
    stroke: #ff5a00;
    stroke-width: 7;
    stroke-linecap: round;
    stroke-linejoin: round;
}
```
